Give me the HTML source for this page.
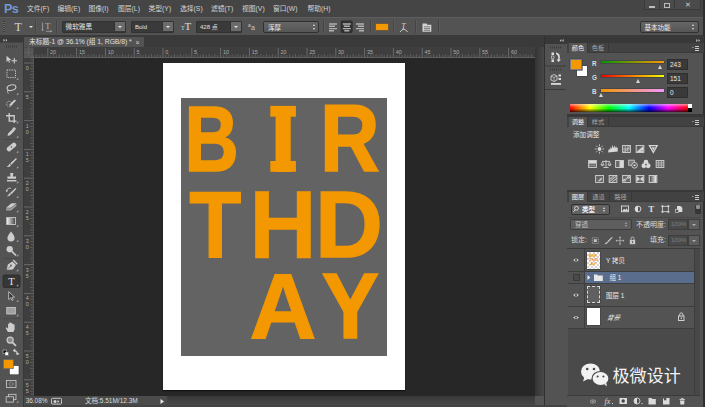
<!DOCTYPE html>
<html lang="zh-CN">
<head>
<meta charset="utf-8">
<title>Photoshop</title>
<style>
html,body{margin:0;padding:0;}
body{width:705px;height:407px;overflow:hidden;background:#282828;position:relative;
 font-family:"Liberation Sans","Noto Sans CJK SC",sans-serif;font-size:7px;color:#d8d8d8;}
.abs{position:absolute;}
div{box-sizing:border-box;}
.t{position:absolute;white-space:nowrap;line-height:1;}
/* top bars */
#menubar{left:0;top:0;width:705px;height:17px;background:#454545;}
#optbar{left:0;top:17px;width:705px;height:19px;background:#535353;border-top:1px solid #5e5e5e;border-bottom:1px solid #3a3a3a;}
#tabbar{left:24px;top:36px;width:520px;height:11px;background:#3a3a3a;}
#doctab{left:24px;top:37px;width:120px;height:10px;background:#535353;border-radius:1px 1px 0 0;}
#hruler{left:24px;top:47px;width:511px;height:11px;background:#3e3e3e;border-bottom:1px solid #606060;}
#vruler{left:24px;top:58px;width:9.500px;height:338px;background:#3e3e3e;border-right:0.500px solid #555;}
#toolbar{left:0;top:36px;width:24px;height:371px;background:#535353;border-right:1px solid #383838;}
#canvas{left:33px;top:58px;width:502px;height:338px;background:#272727;}
#doc{left:163px;top:62.700px;width:241.500px;height:327.300px;background:#fff;box-shadow:0 1px 1px #111;}
#gray{left:180.500px;top:97.700px;width:206px;height:258px;background:#636363;}
#status{left:24px;top:396px;width:511px;height:9px;background:linear-gradient(#383838,#484848);}
#statusL{left:24px;top:396px;width:142.500px;height:8.500px;background:#4b4b4b;}
/* right */
#rgap{left:535px;top:47px;width:9px;height:358px;background:linear-gradient(90deg,#343434,#484848);}
#rstrip{left:545px;top:36px;width:22px;height:371px;background:#535353;}
#rpanel{left:567px;top:36px;width:136px;height:371px;background:#535353;}
#redge{left:703px;top:0;width:2px;height:407px;background:#2e2e2e;}

/* menu */
.mi{position:absolute;top:5px;font-size:6.8px;line-height:8px;color:#d4d4d4;white-space:nowrap;}
#ps{left:4px;top:1.5px;font-size:12.5px;line-height:14px;font-weight:bold;color:#7299d0;letter-spacing:-0.6px;}
.wbtn{position:absolute;top:0;height:9.500px;background:#4b4b4b;border:1px solid #3a3a3a;border-top:none;}
/* options */
.dd{position:absolute;top:21px;height:11.500px;background:#3a3a3a;border:1px solid #323232;border-radius:1px;}
.dd .tx{position:absolute;left:3px;top:1.300px;font-size:6px;line-height:8px;color:#e2e2e2;white-space:nowrap;}
.dd .btn{position:absolute;right:0;top:0;width:11px;height:9px;background:#6b6b6b;border-left:1px solid #2f2f2f;}
.dd .btn:after{content:"";position:absolute;left:3px;top:3.500px;border:2px solid transparent;border-top:2.5px solid #e8e8e8;}
.sep{position:absolute;top:20px;width:1px;height:13px;background:#444;border-right:1px solid #5b5b5b;box-sizing:content-box;}
.ddl{position:absolute;top:21.300px;height:12px;background:linear-gradient(#656565,#565656);border:1px solid #303030;border-radius:2px;}
.ddl .tx{position:absolute;left:4px;top:1.5px;font-size:6.5px;line-height:8px;color:#f0f0f0;white-space:nowrap;}
.ud{position:absolute;right:2.500px;top:2px;width:3px;height:7px;}
.ud:before{content:"";position:absolute;left:0;top:0;border:1.600px solid transparent;border-top:none;border-bottom:2.200px solid #e0e0e0;}
.ud:after{content:"";position:absolute;left:0;top:3.800px;border:1.600px solid transparent;border-bottom:none;border-top:2.200px solid #e0e0e0;}

/* right panels */
.ptabs{position:absolute;left:567px;width:136.500px;height:10px;background:#424242;border-bottom:1px solid #3a3a3a;}
.ptab{position:absolute;top:0;height:10px;font-size:6.2px;line-height:10px;color:#a8a8a8;text-align:center;border-right:1px solid #383838;}
.ptab.on{background:#535353;color:#f2f2f2;}
.pmenu{position:absolute;right:4.500px;top:3px;width:7px;height:5px;}
.pmenu:before{content:"";position:absolute;left:0;top:1px;border:1.3px solid transparent;border-top:1.6px solid #c8c8c8;}
.pmenu:after{content:"";position:absolute;left:3px;top:0;width:4px;height:1px;background:#c8c8c8;box-shadow:0 2px 0 #c8c8c8,0 4px 0 #c8c8c8;}
.psep{position:absolute;left:567px;width:136.500px;height:3px;background:#383838;}
.vbox{position:absolute;left:667px;width:21px;height:11px;background:#3a3a3a;border:1px solid #2e2e2e;font-size:6.5px;line-height:9px;color:#e8e8e8;padding-left:2px;}
.sl{position:absolute;left:600.600px;width:63px;height:2.8px;box-shadow:0 0 0 0.5px #3a3a3a;}
.th{position:absolute;width:0;height:0;border:2.5px solid transparent;border-top:none;border-bottom:4px solid #d6d6d6;}
.lb{position:absolute;font-size:6.5px;line-height:7px;color:#dcdcdc;white-space:nowrap;}

.lrow{position:absolute;left:568px;width:126px;background:#535353;border-bottom:1px solid #3e3e3e;}
.eyec{position:absolute;left:0;top:0;bottom:0;width:17px;border-right:1px solid #3e3e3e;background:#535353;}
.thumb{position:absolute;left:19.300px;width:13px;background:#fff;box-shadow:0 0 0 0.500px #3c3c3c;}
.lname{position:absolute;font-size:6.5px;line-height:8px;color:#ececec;white-space:nowrap;}
.dim{color:#7e7e7e !important;}
</style>
</head>
<body>
<!-- MENU BAR -->
<div class="abs" id="menubar">
 <div class="t" id="ps">Ps</div>
 <div class="mi" style="left:27px">文件(F)</div>
 <div class="mi" style="left:57.5px">编辑(E)</div>
 <div class="mi" style="left:88.5px">图像(I)</div>
 <div class="mi" style="left:118px">图层(L)</div>
 <div class="mi" style="left:148.5px">类型(Y)</div>
 <div class="mi" style="left:180px">选择(S)</div>
 <div class="mi" style="left:211px">滤镜(T)</div>
 <div class="mi" style="left:242px">视图(V)</div>
 <div class="mi" style="left:273px">窗口(W)</div>
 <div class="mi" style="left:307.5px">帮助(H)</div>
 <div class="wbtn" style="left:643.500px;width:16px"><div class="abs" style="left:4px;top:5.500px;width:6px;height:2px;background:#bcbcbc"></div></div>
 <div class="wbtn" style="left:658.500px;width:16.500px"><div class="abs" style="left:4.500px;top:2.800px;width:6px;height:4.800px;border:1px solid #bcbcbc;border-top-width:1.5px"></div></div>
 <div class="wbtn" style="left:674px;width:27px"><div class="t" style="left:10px;top:0.500px;font-size:7px;color:#c8c8c8">✕</div></div>
</div>
<!-- OPTIONS BAR -->
<div class="abs" id="optbar">
</div>
<div class="abs" style="left:3px;top:21px;width:2px;height:11px;background:repeating-linear-gradient(#3a3a3a 0 1px,#6a6a6a 1px 2px)"></div>
<div class="t" style="left:14.500px;top:20.500px;font-family:'Liberation Serif',serif;font-size:12px;color:#d8d8d8">T</div>
<div class="abs" style="left:28.5px;top:26px;border:2px solid transparent;border-top:2.5px solid #e0e0e0"></div>
<div class="sep" style="left:35px"></div>
<div class="sep" style="left:56px"></div>
<div class="t" style="left:45px;top:21.800px;font-family:'Liberation Serif',serif;font-size:9px;color:#b0b0b0">T</div>
<svg class="abs" style="left:40px;top:20px" width="14" height="14" viewBox="0 0 14 14"><path d="M2.500 2.500v7.500M6 11.300h5.500" stroke="#a4a4a4" stroke-width="0.800" fill="none"/><path d="M2.500 11.300l-1.300-1.800h2.600zM12.300 11.300l-1.800-1.300v2.600z" fill="#a4a4a4"/></svg>
<div class="dd" style="left:61.500px;width:64.500px"><div class="tx" style="font-size:6.700px;top:0.800px">微软雅黑</div><div class="btn"></div></div>
<div class="dd" style="left:131px;width:43px"><div class="tx">Bold</div><div class="btn"></div></div>
<div class="t" style="left:181px;top:24.5px;font-family:'Liberation Serif',serif;font-size:6px;color:#dcdcdc">T</div>
<div class="t" style="left:184.5px;top:21px;font-family:'Liberation Serif',serif;font-size:11px;color:#dcdcdc">T</div>
<div class="dd" style="left:196px;width:46px"><div class="tx">428 点</div><div class="btn"></div></div>
<div class="t" style="left:248px;top:23px;font-size:5px;color:#c8c8c8">a</div>
<div class="t" style="left:251px;top:24px;font-size:7px;color:#c8c8c8">a</div>
<div class="ddl" style="left:263px;width:56px"><div class="tx">浑厚</div><div class="ud"></div></div>
<div class="sep" style="left:323px"></div>
<div class="sep" style="left:370px"></div>
<div class="abs" style="left:375px;top:23px;width:14px;height:8px;background:#f39800;border:1px solid #6d5a3a"></div>
<div class="sep" style="left:393px"></div>
<div class="sep" style="left:415px"></div>
<div class="sep" style="left:438px"></div>
<div class="ddl" style="left:639.500px;width:59px"><div class="tx">基本功能</div><div class="ud"></div></div>

<!-- DOCUMENT AREA -->
<div class="abs" id="tabbar"></div>
<div class="abs" id="doctab"><div class="t" style="left:5px;top:2px;font-size:6.8px;color:#e0e0e0;letter-spacing:-0.05px">未标题-1 @ 36.1% (组 1, RGB/8) *</div><div class="t" style="left:111.500px;top:2px;font-size:7px;color:#d0d0d0">×</div></div>
<div class="abs" id="canvas"></div>
<div class="abs" id="hruler"></div>
<div class="abs" id="vruler"></div>
<svg class="abs" id="rulers" style="left:0;top:0" width="705" height="407" viewBox="0 0 705 407">
 <rect x="24" y="47.5" width="9.5" height="10" fill="#555"/>
 <path d="M24.5 52.5H33M28.5 47V57" stroke="#777" stroke-width="0.6" stroke-dasharray="1 1" fill="none"/>
 <path d="M47.8 48V57M76.6 48V57M105.4 48V57M134.2 48V57M163.0 48V57M191.8 48V57M220.6 48V57M249.4 48V57M278.2 48V57M307.0 48V57M335.8 48V57M364.6 48V57M393.4 48V57M422.2 48V57M451.0 48V57M479.8 48V57M508.6 48V57" stroke="#7c7c7c" stroke-width="0.7" fill="none"/>
 <path d="M33.4 55V57M36.3 54V57M39.2 55V57M42.0 54V57M44.9 55V57M50.7 55V57M53.6 54V57M56.4 55V57M59.3 54V57M62.2 55V57M65.1 54V57M68.0 55V57M70.8 54V57M73.7 55V57M79.5 55V57M82.4 54V57M85.2 55V57M88.1 54V57M91.0 55V57M93.9 54V57M96.8 55V57M99.6 54V57M102.5 55V57M108.3 55V57M111.2 54V57M114.0 55V57M116.9 54V57M119.8 55V57M122.7 54V57M125.6 55V57M128.4 54V57M131.3 55V57M137.1 55V57M140.0 54V57M142.8 55V57M145.7 54V57M148.6 55V57M151.5 54V57M154.4 55V57M157.2 54V57M160.1 55V57M165.9 55V57M168.8 54V57M171.6 55V57M174.5 54V57M177.4 55V57M180.3 54V57M183.2 55V57M186.0 54V57M188.9 55V57M194.7 55V57M197.6 54V57M200.4 55V57M203.3 54V57M206.2 55V57M209.1 54V57M212.0 55V57M214.8 54V57M217.7 55V57M223.5 55V57M226.4 54V57M229.2 55V57M232.1 54V57M235.0 55V57M237.9 54V57M240.8 55V57M243.6 54V57M246.5 55V57M252.3 55V57M255.2 54V57M258.0 55V57M260.9 54V57M263.8 55V57M266.7 54V57M269.6 55V57M272.4 54V57M275.3 55V57M281.1 55V57M284.0 54V57M286.8 55V57M289.7 54V57M292.6 55V57M295.5 54V57M298.4 55V57M301.2 54V57M304.1 55V57M309.9 55V57M312.8 54V57M315.6 55V57M318.5 54V57M321.4 55V57M324.3 54V57M327.2 55V57M330.0 54V57M332.9 55V57M338.7 55V57M341.6 54V57M344.4 55V57M347.3 54V57M350.2 55V57M353.1 54V57M356.0 55V57M358.8 54V57M361.7 55V57M367.5 55V57M370.4 54V57M373.2 55V57M376.1 54V57M379.0 55V57M381.9 54V57M384.8 55V57M387.6 54V57M390.5 55V57M396.3 55V57M399.2 54V57M402.0 55V57M404.9 54V57M407.8 55V57M410.7 54V57M413.6 55V57M416.4 54V57M419.3 55V57M425.1 55V57M428.0 54V57M430.8 55V57M433.7 54V57M436.6 55V57M439.5 54V57M442.4 55V57M445.2 54V57M448.1 55V57M453.9 55V57M456.8 54V57M459.6 55V57M462.5 54V57M465.4 55V57M468.3 54V57M471.2 55V57M474.0 54V57M476.9 55V57M482.7 55V57M485.6 54V57M488.4 55V57M491.3 54V57M494.2 55V57M497.1 54V57M500.0 55V57M502.8 54V57M505.7 55V57M511.5 55V57M514.4 54V57M517.2 55V57M520.1 54V57M523.0 55V57M525.9 54V57M528.8 55V57M531.6 54V57" stroke="#747474" stroke-width="0.6" fill="none"/>
 <path d="M24 63.0H33M24 91.8H33M24 120.6H33M24 149.4H33M24 178.2H33M24 207.0H33M24 235.8H33M24 264.6H33M24 293.4H33M24 322.2H33M24 351.0H33M24 379.8H33" stroke="#7c7c7c" stroke-width="0.7" fill="none"/>
 <path d="M30 57.2H33M31 60.1H33M31 65.9H33M30 68.8H33M31 71.6H33M30 74.5H33M31 77.4H33M30 80.3H33M31 83.2H33M30 86.0H33M31 88.9H33M31 94.7H33M30 97.6H33M31 100.4H33M30 103.3H33M31 106.2H33M30 109.1H33M31 112.0H33M30 114.8H33M31 117.7H33M31 123.5H33M30 126.4H33M31 129.2H33M30 132.1H33M31 135.0H33M30 137.9H33M31 140.8H33M30 143.6H33M31 146.5H33M31 152.3H33M30 155.2H33M31 158.0H33M30 160.9H33M31 163.8H33M30 166.7H33M31 169.6H33M30 172.4H33M31 175.3H33M31 181.1H33M30 184.0H33M31 186.8H33M30 189.7H33M31 192.6H33M30 195.5H33M31 198.4H33M30 201.2H33M31 204.1H33M31 209.9H33M30 212.8H33M31 215.6H33M30 218.5H33M31 221.4H33M30 224.3H33M31 227.2H33M30 230.0H33M31 232.9H33M31 238.7H33M30 241.6H33M31 244.4H33M30 247.3H33M31 250.2H33M30 253.1H33M31 256.0H33M30 258.8H33M31 261.7H33M31 267.5H33M30 270.4H33M31 273.2H33M30 276.1H33M31 279.0H33M30 281.9H33M31 284.8H33M30 287.6H33M31 290.5H33M31 296.3H33M30 299.2H33M31 302.0H33M30 304.9H33M31 307.8H33M30 310.7H33M31 313.6H33M30 316.4H33M31 319.3H33M31 325.1H33M30 328.0H33M31 330.8H33M30 333.7H33M31 336.6H33M30 339.5H33M31 342.4H33M30 345.2H33M31 348.1H33M31 353.9H33M30 356.8H33M31 359.6H33M30 362.5H33M31 365.4H33M30 368.3H33M31 371.2H33M30 374.0H33M31 376.9H33M31 382.7H33M30 385.6H33M31 388.4H33M30 391.3H33M31 394.2H33" stroke="#747474" stroke-width="0.6" fill="none"/>
 <g font-family="Liberation Sans, sans-serif" font-size="5.4" fill="#adadad"><text x="50.1" y="53.6">20</text><text x="78.9" y="53.6">15</text><text x="107.7" y="53.6">10</text><text x="136.5" y="53.6">5</text><text x="165.3" y="53.6">0</text><text x="194.1" y="53.6">5</text><text x="222.9" y="53.6">10</text><text x="251.7" y="53.6">15</text><text x="280.5" y="53.6">20</text><text x="309.3" y="53.6">25</text><text x="338.1" y="53.6">30</text><text x="366.9" y="53.6">35</text><text x="395.7" y="53.6">40</text><text x="424.5" y="53.6">45</text><text x="453.3" y="53.6">50</text><text x="482.1" y="53.6">55</text><text x="510.9" y="53.6">60</text><text x="25.8" y="70.0">0</text><text x="25.8" y="98.8">5</text><text x="25.8" y="127.6">1</text><text x="25.8" y="133.6">0</text><text x="25.8" y="156.4">1</text><text x="25.8" y="162.4">5</text><text x="25.8" y="185.2">2</text><text x="25.8" y="191.2">0</text><text x="25.8" y="214.0">2</text><text x="25.8" y="220.0">5</text><text x="25.8" y="242.8">3</text><text x="25.8" y="248.8">0</text><text x="25.8" y="271.6">3</text><text x="25.8" y="277.6">5</text><text x="25.8" y="300.4">4</text><text x="25.8" y="306.4">0</text><text x="25.8" y="329.2">4</text><text x="25.8" y="335.2">5</text><text x="25.8" y="358.0">5</text><text x="25.8" y="364.0">0</text><text x="25.8" y="386.8">5</text><text x="25.8" y="392.8">5</text></g>
</svg>
<div class="abs" id="doc"></div>
<div class="abs" id="gray"></div>
<svg class="abs" id="letters" style="left:0;top:0" width="705" height="407" viewBox="0 0 705 407">
 <g font-family="Liberation Sans, sans-serif" font-weight="bold" fill="#f39800" stroke="#f39800">
  <text font-size="93.17" stroke-width="1.6" transform="translate(184.51,170.70) scale(0.8061,1)">B</text>
  <text font-size="92.88" stroke-width="2.0" transform="translate(270.57,170.80) scale(0.9822,1)">I</text>
  <text font-size="93.75" stroke-width="1.6" transform="translate(319.98,170.90) scale(0.8798,1)">R</text>
  <text font-size="94.33" stroke-width="1.2" transform="translate(189.20,257.50) scale(0.9038,1)">T</text>
  <text font-size="95.49" stroke-width="0.4" transform="translate(249.10,257.90) scale(0.9850,1)">H</text>
  <text font-size="94.04" stroke-width="1.4" transform="translate(314.90,257.40) scale(0.9992,1)">D</text>
  <text font-size="92.15" stroke-width="1.2" transform="translate(249.49,338.20) scale(1.0058,1)">A</text>
  <text font-size="91.86" stroke-width="1.6" transform="translate(321.79,338.00) scale(0.9325,1)">Y</text>
 </g>
 <rect x="270.3" y="105.9" width="25.6" height="10.8" fill="#f39800"/>
 <rect x="270.3" y="161" width="25.6" height="10.8" fill="#f39800"/>
</svg>
<div class="abs" id="status"></div>
<div class="abs" id="statusL"></div>
<svg class="abs" style="left:0;top:0" width="705" height="407" viewBox="0 0 705 407">
 <rect x="340.700" y="20.500" width="12" height="12.500" rx="1.500" fill="#303030"/>
 <g stroke="#b0b0b0" stroke-width="1.400" fill="none">
  <path d="M329 24h8M329 26.300h6M329 28.600h8M329 30.800h5"/>
  <path d="M342.800 24h8M343.800 26.300h6M342.800 28.600h8M344.300 30.800h5"/>
  <path d="M356 24h8M358 26.300h6M356 28.600h8M359 30.800h5"/>
 </g>
 <!-- warp text -->
 <text x="401.300" y="28.500" font-family="Liberation Serif, serif" font-size="8" font-style="italic" fill="#d4d4d4">T</text>
 <path d="M400 32q3.800-5.500 7.600 0" fill="none" stroke="#d4d4d4" stroke-width="0.900"/>
 <!-- panel icon -->
 <path d="M422.500 23.500h4l0.800 1.300h4v7h-8.800z" fill="#d4d4d4"/><path d="M424 26.800h6M424 28.600h6M424 30.300h6" stroke="#555" stroke-width="0.700"/>
 <!-- status -->
 <rect x="51.500" y="398.300" width="10" height="5.800" rx="1" fill="none" stroke="#d4d4d4" stroke-width="0.900"/><circle cx="55" cy="401.500" r="1.500" fill="#d4d4d4"/><path d="M57.500 400v3l2-1.500z" fill="#d4d4d4"/>
 <path d="M160.500 399v5l3.500-2.500z" fill="#e8e8e8"/>
</svg>
<div class="t" style="left:25.700px;top:398.300px;font-size:6.400px;color:#dcdcdc">36.08%</div>
<div class="t" style="left:85px;top:398.300px;font-size:6.500px;color:#dcdcdc">文档:5.51M/12.3M</div>
<!-- TOOLBAR -->
<div class="abs" id="toolbar"></div>
<svg class="abs" id="tools" style="left:0;top:0" width="24" height="407" viewBox="0 0 24 407">
 <rect x="0" y="36" width="24" height="6.500" fill="#3a3a3a"/>
 <path d="M3.500 38.800v3l1.500-1.500zM5.800 38.800v3l1.500-1.500z" fill="#c8c8c8"/>
 <path d="M6 46.500h12" stroke="#3c3c3c" stroke-width="2" stroke-dasharray="1 1"/>
 <path d="M3 139.500h18M3 258.500h18M3 318.500h18" stroke="#474747" stroke-width="0.800"/>
 <g transform="translate(11.3,59) scale(1) translate(-11.3,-59)"><path d="M6.500 55.7v6.300l1.600-1.400 1 2.200 1-0.500-1-2.100 2.200-0.200z" fill="#cdcdcd"/><path d="M14.300 58v5.600M11.500 60.8h5.600" stroke="#cdcdcd" stroke-width="1.100" fill="none"/></g><g transform="translate(11.3,74) scale(0.9) translate(-11.3,-74)"><rect x="6.5" y="69.5" width="9.500" height="8.500" fill="none" stroke="#cdcdcd" stroke-width="1" stroke-dasharray="1.500 1"/></g><path d="M18.3 79.8h-2l2-2z" fill="#b0b0b0"/><g transform="translate(11.3,89) scale(0.9) translate(-11.3,-89)"><ellipse cx="11.5" cy="87.5" rx="5" ry="3" fill="none" stroke="#cdcdcd" stroke-width="1.200" transform="rotate(-15 11.5 87.5)"/><path d="M8 90q-2 2 0 4" stroke="#cdcdcd" stroke-width="1" fill="none"/></g><path d="M18.3 94.8h-2l2-2z" fill="#b0b0b0"/><g transform="translate(11.3,103) scale(0.9) translate(-11.3,-103)"><circle cx="9" cy="104" r="3" fill="none" stroke="#cdcdcd" stroke-width="0.900" stroke-dasharray="1.200 0.800"/><path d="M9 105l6-6 1.500 1.500-6 6z" fill="#cdcdcd"/></g><path d="M18.3 108.8h-2l2-2z" fill="#b0b0b0"/><g transform="translate(11.3,117.5) scale(0.9) translate(-11.3,-117.5)"><path d="M9 112.5v9h8M5.500 115.5h9v8" fill="none" stroke="#cdcdcd" stroke-width="1.500"/></g><path d="M18.3 123.3h-2l2-2z" fill="#b0b0b0"/><g transform="translate(11.3,132) scale(0.9) translate(-11.3,-132)"><path d="M7 136.5l1-3 5-5 2 2-5 5z" fill="#cdcdcd"/><path d="M12.500 128l2-1.500 2 2-1.500 2z" fill="#cdcdcd"/></g><path d="M18.3 137.8h-2l2-2z" fill="#b0b0b0"/><g transform="translate(11.3,147) scale(0.9) translate(-11.3,-147)"><rect x="5.500" y="144.5" width="12" height="5" rx="2" fill="#cdcdcd" transform="rotate(-40 11.500 147)"/><circle cx="11.500" cy="147" r="0.900" fill="#535353"/></g><path d="M18.3 152.8h-2l2-2z" fill="#b0b0b0"/><g transform="translate(11.3,162.5) scale(0.9) translate(-11.3,-162.5)"><path d="M16.500 157.5l1 1-6 6.500-1.500-1.500z" fill="#cdcdcd"/><path d="M9.500 164.0l1.500 1.500q-1.500 2.500-5 2 2-1 3.500-3.500z" fill="#cdcdcd"/></g><path d="M18.3 168.3h-2l2-2z" fill="#b0b0b0"/><g transform="translate(11.3,177.5) scale(0.9) translate(-11.3,-177.5)"><path d="M10 172.5h3.500l-0.500 4h3.500v2.500h-9.500v-2.500h3.500z" fill="#cdcdcd"/><rect x="6.500" y="180.3" width="10.500" height="1.600" fill="#cdcdcd"/></g><path d="M18.3 183.3h-2l2-2z" fill="#b0b0b0"/><g transform="translate(11.3,192) scale(0.9) translate(-11.3,-192)"><path d="M16 187.5l1 1-5.500 6-1.500-1.500z" fill="#cdcdcd"/><path d="M9.500 193l1.500 1.500q-1.500 2.500-4.500 2 1.500-1 3-3.500z" fill="#cdcdcd"/><path d="M6 191a3.500 3.500 0 0 1 5-3" stroke="#cdcdcd" stroke-width="1" fill="none"/><path d="M5 190l1.200 2.200 1.800-1.800z" fill="#cdcdcd"/></g><path d="M18.3 197.8h-2l2-2z" fill="#b0b0b0"/><g transform="translate(11.3,206.5) scale(0.9) translate(-11.3,-206.5)"><path d="M5.500 208.0l6-5h5.500l-6 5z" fill="#cdcdcd"/><path d="M5.500 208.5h5.500l6-5v2.500l-6 5h-5.500z" fill="#a0a0a0"/></g><path d="M18.3 212.3h-2l2-2z" fill="#b0b0b0"/><g transform="translate(11.3,221) scale(0.8) translate(-11.3,-221)"><rect x="5.500" y="216.5" width="11" height="9" fill="#9a9a9a" stroke="#cdcdcd" stroke-width="1"/></g><path d="M18.3 226.8h-2l2-2z" fill="#b0b0b0"/><g transform="translate(11.3,236) scale(0.9) translate(-11.3,-236)"><path d="M11 231q4 5 4 7.200a4 3.800 0 0 1-8 0q0-2.200 4-7.200z" fill="#cdcdcd"/></g><path d="M18.3 241.8h-2l2-2z" fill="#b0b0b0"/><g transform="translate(11.3,250.5) scale(0.9) translate(-11.3,-250.5)"><circle cx="9.500" cy="249.0" r="3.500" fill="#cdcdcd"/><path d="M12 251.5l4.500 4.500" stroke="#cdcdcd" stroke-width="1.800" fill="none"/></g><path d="M18.3 256.3h-2l2-2z" fill="#b0b0b0"/><g transform="translate(11.3,265.5) scale(0.9) translate(-11.3,-265.5)"><path d="M6 270.5l1.500-6 5-3.500 4 4-3.500 5z" fill="#cdcdcd"/><circle cx="11" cy="265.5" r="1" fill="#535353"/><path d="M6 270.5l4.500-4.500" stroke="#535353" stroke-width="0.700"/><path d="M13.500 259.5l4.500 4.500" stroke="#cdcdcd" stroke-width="1.500"/></g><path d="M18.3 271.3h-2l2-2z" fill="#b0b0b0"/><rect x="3" y="275.0" width="17" height="12.500" rx="1.500" fill="#363636" stroke="#2a2a2a" stroke-width="0.800"/><text x="8.200" y="285.3" font-family="Liberation Serif, serif" font-size="10.500" fill="#e4e4e4">T</text><path d="M18.3 286.3h-2l2-2z" fill="#b0b0b0"/><g transform="translate(11.3,296) scale(0.8) translate(-11.3,-296)"><path d="M8 290.5v10l2.500-2.300 1.600 3.300 1.600-0.800-1.600-3.200h3.300z" fill="#3a3a3a" stroke="#cdcdcd" stroke-width="1"/></g><path d="M18.3 301.8h-2l2-2z" fill="#b0b0b0"/><g transform="translate(11.3,310.5) scale(0.78) translate(-11.3,-310.5)"><rect x="5.500" y="306.5" width="11" height="8.500" fill="#a0a0a0" stroke="#cdcdcd" stroke-width="1"/></g><path d="M18.3 316.3h-2l2-2z" fill="#b0b0b0"/><g transform="translate(11.3,327.5) scale(0.9) translate(-11.3,-327.5)"><path d="M7.500 332.5l-2.500-4.500 1.200-0.700 1.500 1.500v-5.500h1.400v-1.300h1.500v0.600h1.500v0.700h1.400v1h1.500v5.200l-1.300 3z" fill="#cdcdcd"/></g><g transform="translate(11.3,341) scale(0.9) translate(-11.3,-341)"><circle cx="10" cy="340" r="3.400" fill="#8a8a8a" stroke="#cdcdcd" stroke-width="1.300"/><path d="M12.500 342.5l4 4" stroke="#cdcdcd" stroke-width="2" fill="none"/></g><rect x="3" y="350.0" width="3.500" height="3.500" fill="#111" stroke="#cdcdcd" stroke-width="0.600"/><rect x="5" y="352.0" width="3.500" height="3.500" fill="#fff" stroke="#333" stroke-width="0.400"/><path d="M14.500 350.5q3 0 3 3.500M13 350.5l2-1.500v3zM17.500 355.0l-1.500-1.500h3z" fill="#cdcdcd" stroke="#cdcdcd" stroke-width="0.700"/><rect x="9.300" y="365.500" width="9.700" height="9.300" fill="#fff" stroke="#333" stroke-width="0.600"/><rect x="3.500" y="359.700" width="9.800" height="9" fill="#f39800" stroke="#6a6a6a" stroke-width="0.700"/><g transform="translate(11.3,383.8) scale(0.82) translate(-11.3,-383.8)"><rect x="5.500" y="379.8" width="11.500" height="8.500" fill="#535353" stroke="#cdcdcd" stroke-width="1"/><circle cx="11.200" cy="384.0" r="2.300" fill="none" stroke="#cdcdcd" stroke-width="0.900" stroke-dasharray="1 0.700"/></g><g transform="translate(11.3,398) scale(0.82) translate(-11.3,-398)"><rect x="8" y="393.5" width="9" height="6.500" fill="#535353" stroke="#cdcdcd" stroke-width="1"/><rect x="5" y="396.5" width="9" height="6.500" fill="#535353" stroke="#cdcdcd" stroke-width="1"/></g><path d="M18.3 402.8h-2l2-2z" fill="#b0b0b0"/>
</svg>
<!-- RIGHT PANELS -->
<div class="abs" id="rgap"></div>
<div class="abs" style="left:535px;top:396px;width:9px;height:9px;background:#555"></div>
<div class="abs" style="left:544px;top:36px;width:1.5px;height:371px;background:#303030"></div>
<div class="abs" style="left:566px;top:36px;width:1.5px;height:371px;background:#3a3a3a"></div>
<div class="abs" id="rstrip"></div>
<div class="abs" id="rpanel"></div>
<div class="abs" id="redge"></div>
<div class="abs" style="left:545px;top:36px;width:158.500px;height:7.500px;background:#383838"></div>
<svg class="abs" style="left:545px;top:36px" width="160" height="60" viewBox="0 0 160 60">
 <path d="M18.600 3v3l-1.500-1.500zM16.300 3v3l-1.500-1.500z" fill="#c8c8c8"/>
 <path d="M151.200 3v3l1.500-1.500zM153.500 3v3l1.500-1.500z" fill="#c8c8c8"/>
 <path d="M5 11.500h12M5 33.500h12" stroke="#3c3c3c" stroke-width="2" stroke-dasharray="1 1"/>
 <path d="M0 30h21M0 53.500h21" stroke="#3a3a3a" stroke-width="1.200"/>
 <g fill="#dcdcdc">
  <rect x="6.500" y="16.500" width="2.500" height="2.500"/><rect x="6.500" y="20" width="2.500" height="2.500" fill="none" stroke="#dcdcdc" stroke-width="0.600"/><rect x="6.500" y="23.500" width="2.500" height="2.500"/>
  <path d="M11 16.500q5 0.500 3.500 7l1.500 0-2.500 2.500-2-2.500h1.500q1-4-2-5.500z"/>
  <path d="M6 40l3-1.500 3 1.500v4l-3 1.500-3-1.500z" fill="none" stroke="#dcdcdc" stroke-width="0.800"/><path d="M9 41.500v4M6 40l3 1.500 3-1.500" fill="none" stroke="#dcdcdc" stroke-width="0.600"/>
  <rect x="13.500" y="38.500" width="2.500" height="2"/><rect x="13.500" y="42" width="2.500" height="2"/><rect x="6" y="47" width="10" height="1.800"/>
 </g>
</svg>
<!-- COLOR PANEL -->
<div class="ptabs" style="top:43px"><div class="ptab on" style="left:1.700px;width:19.500px">颜色</div><div class="ptab" style="left:21.200px;width:20.500px">色板</div><div class="pmenu"></div></div>
<div class="abs" style="left:577px;top:65.500px;width:10px;height:10.200px;background:#fff;box-shadow:0 0 0 0.700px #444"></div>
<div class="abs" style="left:571.300px;top:59.700px;width:10px;height:9.800px;background:#f39800;box-shadow:0 0 0 0.800px #8a8a8a,0 0 0 1.600px #444"></div>
<div class="lb" style="left:592px;top:59.800px;font-weight:bold;font-size:6.300px">R</div>
<div class="lb" style="left:592px;top:73.800px;font-weight:bold;font-size:6.300px">G</div>
<div class="lb" style="left:592px;top:87.800px;font-weight:bold;font-size:6.300px">B</div>
<div class="sl" style="top:60.600px;background:linear-gradient(90deg,#009700,#ff9700)"></div>
<div class="sl" style="top:74.600px;background:linear-gradient(90deg,#f30000,#f3ff00)"></div>
<div class="sl" style="top:88.800px;background:linear-gradient(90deg,#f39700,#f397ff)"></div>
<div class="th" style="left:658px;top:64.500px"></div>
<div class="th" style="left:635.500px;top:78.500px"></div>
<div class="th" style="left:598.500px;top:92.500px"></div>
<div class="vbox" style="top:59px">243</div>
<div class="vbox" style="top:73px">151</div>
<div class="vbox" style="top:87px">0</div>
<div class="abs" style="left:570.300px;top:104px;width:117.700px;height:8.300px;background:linear-gradient(180deg,rgba(255,255,255,0.550),rgba(255,255,255,0) 45%,rgba(0,0,0,0) 55%,rgba(0,0,0,0.750)),linear-gradient(90deg,#f00,#ff0 17%,#0f0 33%,#0ff 50%,#00f 67%,#f0f 83%,#f00)"></div>
<div class="abs" style="left:688px;top:104px;width:4px;height:4.200px;background:#fff"></div>
<div class="abs" style="left:688px;top:108.200px;width:4px;height:4.100px;background:#000"></div>
<div class="psep" style="top:114px"></div>
<!-- ADJUSTMENTS PANEL -->
<div class="ptabs" style="top:117px"><div class="ptab on" style="left:1.700px;width:19.500px">调整</div><div class="ptab" style="left:21.200px;width:20.500px">样式</div><div class="pmenu"></div></div>
<div class="lb" style="left:573px;top:131px;font-size:6.600px;color:#e6e6e6">添加调整</div>
<svg class="abs" id="adjicons" style="left:0;top:0" width="705" height="407" viewBox="0 0 705 407">
 <g transform="translate(599.5,149) scale(0.86) translate(-599.5,-149)"><circle cx="599.5" cy="149" r="2.200" fill="#d8d8d8"/><path d="M599.5 143.5v2.300M599.5 152.2v2.300M594.0 149h2.300M602.7 149h2.300M595.7 145.2l1.500 1.500M601.8 151.3l1.500 1.500M595.7 152.8l1.500-1.500M601.8 146.7l1.500-1.500" stroke="#d8d8d8" stroke-width="0.900"/></g><g transform="translate(613,149) scale(0.86) translate(-613,-149)"><path d="M607.5 153v-2.500l1-1.500 1 1 1-4 1 3 1-5 1 4 1-3.500 1 3.500 1-2.500 1 2.500 1-1v5z" fill="#d8d8d8"/></g><g transform="translate(626.5,149) scale(0.86) translate(-626.5,-149)"><rect x="622.0" y="145" width="9" height="8" fill="#686868" stroke="#d8d8d8" stroke-width="1"/><path d="M622.5 152.5q5-1 8-7M625.0 145v8M628.0 145v8M622.0 149h9" stroke="#d8d8d8" stroke-width="0.700" fill="none"/></g><g transform="translate(640,149) scale(0.86) translate(-640,-149)"><rect x="635.5" y="145" width="9" height="8" fill="#686868" stroke="#d8d8d8" stroke-width="1"/><path d="M636 152.5l8-7v7z" fill="#d8d8d8"/><path d="M637 147h2.500M638.2 145.8v2.500M641 151h2" stroke="#444" stroke-width="0.600"/></g><g transform="translate(653.3,149) scale(0.86) translate(-653.3,-149)"><path d="M648.8 145h9l-4.500 8z" fill="none" stroke="#d8d8d8" stroke-width="1.500"/><path d="M651.3 147h4l-2 3.500z" fill="#d8d8d8"/></g><g transform="translate(592.5,164) scale(0.86) translate(-592.5,-164)"><rect x="588.0" y="160" width="9" height="8" fill="#686868" stroke="#d8d8d8" stroke-width="1"/><rect x="588.5" y="160.5" width="8" height="3" fill="#d8d8d8"/><path d="M588.5 165.5h8" stroke="#d8d8d8" stroke-width="0.800" stroke-dasharray="1 1"/></g><g transform="translate(606,164) scale(0.86) translate(-606,-164)"><path d="M606 159.5v8M603 168h6M601.5 161h9" stroke="#d8d8d8" stroke-width="1"/><path d="M600 165h3.800l-1.900-3.500zM608.2 165h3.800l-1.900-3.500z" fill="none" stroke="#d8d8d8" stroke-width="0.800"/><path d="M600 165q1.900 2.500 3.800 0zM608.2 165q1.900 2.500 3.800 0z" fill="#d8d8d8"/></g><g transform="translate(619.5,164) scale(0.86) translate(-619.5,-164)"><rect x="615.0" y="160" width="9" height="8" fill="#686868" stroke="#d8d8d8" stroke-width="1"/><rect x="619.5" y="160" width="4.500" height="8" fill="#d8d8d8"/></g><g transform="translate(633,164) scale(0.86) translate(-633,-164)"><rect x="628" y="159.5" width="6.500" height="6" fill="#777" stroke="#d8d8d8" stroke-width="0.900"/><circle cx="634.8" cy="165.5" r="3.300" fill="#555" stroke="#d8d8d8" stroke-width="1"/><circle cx="634.8" cy="165.5" r="1.300" fill="#d8d8d8"/></g><g transform="translate(646,164) scale(0.86) translate(-646,-164)"><circle cx="646" cy="162" r="2.800" fill="#d8d8d8"/><circle cx="643.5" cy="166" r="2.800" fill="#d8d8d8"/><circle cx="648.5" cy="166" r="2.800" fill="#d8d8d8"/><circle cx="646" cy="164.7" r="1" fill="#535353"/></g><g transform="translate(660,164) scale(0.86) translate(-660,-164)"><rect x="655.5" y="160" width="9" height="8" fill="#686868" stroke="#d8d8d8" stroke-width="1"/><path d="M658.5 160v8M661.5 160v8M655.5 162.7h9M655.5 165.3h9" stroke="#d8d8d8" stroke-width="0.700"/></g><g transform="translate(599.5,179) scale(0.86) translate(-599.5,-179)"><rect x="595.0" y="175" width="9" height="8" fill="#686868" stroke="#d8d8d8" stroke-width="1"/><path d="M597.0 181.5l5-5v3.500l-3 1.500z" fill="#d8d8d8"/><path d="M596.5 182l6-6" stroke="#333" stroke-width="0.700"/></g><g transform="translate(613,179) scale(0.86) translate(-613,-179)"><rect x="608.5" y="175" width="9" height="8" fill="#686868" stroke="#d8d8d8" stroke-width="1"/><path d="M609 182l8-6.500M609 179.5l5-4M612 182.5l5-4" stroke="#d8d8d8" stroke-width="1.100"/></g><g transform="translate(626.5,179) scale(0.86) translate(-626.5,-179)"><rect x="622.0" y="175" width="9" height="8" fill="#686868" stroke="#d8d8d8" stroke-width="1"/><path d="M622.5 182.5v-3l3.500-1 1.500-2.500 3-1v3l-3.500 1-1.500 2.500z" fill="#d8d8d8"/><path d="M622.5 182.5l8-7" stroke="#333" stroke-width="0.500"/></g><g transform="translate(640,179) scale(0.86) translate(-640,-179)"><rect x="635.5" y="175" width="9" height="8" fill="#686868" stroke="#d8d8d8" stroke-width="1"/><path d="M636 175.5l4 3.500-4 3.500zM644 175.5l-4 3.500 4 3.500z" fill="#d8d8d8"/></g><g transform="translate(653,179) scale(0.86) translate(-653,-179)"><rect x="648.5" y="175" width="9" height="8" fill="#9a9a9a" stroke="#d8d8d8" stroke-width="1"/></g>
</svg>
<div class="psep" style="top:189.500px"></div>
<!-- LAYERS PANEL -->
<div class="ptabs" style="top:192px"><div class="ptab on" style="left:2px;width:19px">图层</div><div class="ptab" style="left:21px;width:22px">通道</div><div class="ptab" style="left:43px;width:22px">路径</div><div class="pmenu"></div></div>
<!-- layers controls -->
<div class="ddl" style="left:570.500px;top:204px;width:39px;height:10.500px;background:#626262"><div class="tx" style="left:10.500px;top:1px;font-weight:bold">类型</div><div class="ud" style="top:1.500px"></div></div>
<div class="abs" style="left:695px;top:204.500px;width:5.500px;height:9.500px;background:#363636;border-radius:1px"></div>
<div class="abs" style="left:695.500px;top:205px;width:4.500px;height:3.800px;background:#8e8e8e;border-radius:1px"></div>
<div class="abs" style="left:567px;top:216.500px;width:133px;height:1px;background:#484848"></div>
<div class="ddl" style="left:570px;top:219px;width:61.500px;height:11px;background:#5e5e5e;border-color:#3e3e3e"><div class="tx" style="top:1.300px;color:#c2c2c2">穿透</div><div class="ud" style="top:1.500px;opacity:0.600"></div></div>
<div class="lb" style="left:636px;top:221px;font-size:7px">不透明度:</div>
<div class="vbox dim" style="top:219px;left:668px;width:20px;height:11px;background:#4a4a4a;border-color:#3e3e3e;font-size:6px">100%</div>
<div class="abs" style="left:688px;top:219px;width:11.500px;height:11px;background:#5e5e5e;border:1px solid #3e3e3e"><div class="abs" style="left:2.500px;top:3.500px;border:2px solid transparent;border-top:2.500px solid #b0b0b0"></div></div>
<div class="lb" style="left:571px;top:236.300px;font-size:7px">锁定:</div>
<div class="lb" style="left:650px;top:236.300px;font-size:7px">填充:</div>
<div class="vbox dim" style="top:235px;left:668px;width:20px;height:10.500px;background:#4a4a4a;border-color:#3e3e3e;font-size:6px">100%</div>
<div class="abs" style="left:688px;top:235px;width:11.500px;height:10.500px;background:#5e5e5e;border:1px solid #3e3e3e"><div class="abs" style="left:2.500px;top:3.500px;border:2px solid transparent;border-top:2.500px solid #b0b0b0"></div></div>
<div class="abs" style="left:567px;top:248px;width:133px;height:1px;background:#3a3a3a"></div>
<!-- layer list -->
<div class="abs" style="left:568px;top:249px;width:126px;height:146px;background:#4a4a4a"></div>
<div class="abs" style="left:694px;top:249px;width:6px;height:146px;background:#484848;border-left:1px solid #3c3c3c"></div>
<div class="lrow" style="top:249px;height:22.500px"><div class="eyec"></div>
 <div class="thumb" style="top:2.500px;height:17px;background:#fff repeating-conic-gradient(#d4d4d4 0 25%,#fff 0 50%) 0 0/4px 4px"></div>
 <div class="t" style="left:21px;top:4.500px;font-size:4.300px;line-height:4.300px;font-weight:bold;color:#f39800;letter-spacing:0.200px;white-space:pre">BIR<br>THD<br> AY</div>
 <div class="lname" style="left:38px;top:7.500px">Y 拷贝</div></div>
<div class="lrow" style="top:271.500px;height:12.500px;background:#5b6d8c"><div class="eyec"></div>
 <div class="abs" style="left:4.500px;top:2.500px;width:7px;height:7px;background:#4a4a4a;border:0.500px solid #3a3a3a"></div>
 <div class="lname" style="left:41.500px;top:2px">组 1</div></div>
<div class="lrow" style="top:284px;height:23px"><div class="eyec"></div>
 <div class="thumb" style="top:2.300px;height:17px;background:#606060;border:1px dashed #d8d8d8"></div>
 <div class="lname" style="left:38px;top:7.500px">图层 1</div></div>
<div class="lrow" style="top:307px;height:21.500px"><div class="eyec"></div>
 <div class="thumb" style="top:0.800px;height:17.700px"></div>
 <div class="lname" style="left:38.500px;top:6.500px;font-style:italic;transform:skewX(-12deg)">背景</div></div>
<div class="abs" style="left:567px;top:395px;width:133px;height:12px;background:#535353;border-top:1px solid #3a3a3a"></div>
<svg class="abs" style="left:0;top:0" width="705" height="407" viewBox="0 0 705 407">
 <!-- search icon -->
 <circle cx="576.500" cy="208.300" r="1.900" fill="none" stroke="#dcdcdc" stroke-width="0.900"/><path d="M575.200 209.800l-1.800 2" stroke="#dcdcdc" stroke-width="1"/>
 <!-- filter icons -->
 <rect x="621.500" y="206" width="7" height="5.700" fill="none" stroke="#dcdcdc" stroke-width="0.900"/><path d="M622.300 211l1.800-2.200 1.300 1.300 1.300-1.800 1.300 2.700z" fill="#dcdcdc"/>
 <circle cx="638" cy="209" r="2.900" fill="none" stroke="#dcdcdc" stroke-width="0.900"/><path d="M638 206.100a2.900 2.900 0 0 0 0 5.800z" fill="#dcdcdc"/>
 <text x="648.200" y="212" font-family="Liberation Serif, serif" font-weight="bold" font-size="9" fill="#dcdcdc">T</text>
 <rect x="662.500" y="206.300" width="5.800" height="5.400" fill="none" stroke="#dcdcdc" stroke-width="0.800"/><rect x="661.500" y="205.300" width="1.800" height="1.800" fill="#dcdcdc"/><rect x="667.500" y="205.300" width="1.800" height="1.800" fill="#dcdcdc"/><rect x="661.500" y="210.900" width="1.800" height="1.800" fill="#dcdcdc"/><rect x="667.500" y="210.900" width="1.800" height="1.800" fill="#dcdcdc"/>
 <path d="M677 206h3.500l1.800 1.800v4.200h-5.300z" fill="#dcdcdc"/><rect x="675.500" y="209.300" width="3.200" height="3" fill="#535353" stroke="#dcdcdc" stroke-width="0.600"/>
 <!-- lock icons -->
 <rect x="592.300" y="237.800" width="6" height="5.600" fill="none" stroke="#c4c4c4" stroke-width="0.700" stroke-dasharray="1 0.800"/><rect x="593.800" y="239.200" width="3" height="2.800" fill="#c4c4c4"/>
 <path d="M612 236.800l0.700 0.700-4.300 4.800-1.100-1.100z" fill="#c4c4c4"/><path d="M607 241.500l1.100 1.100q-1.200 1.800-3.900 1.500 1.600-0.700 2.800-2.600z" fill="#c4c4c4"/>
 <path d="M620 237v7.400M616.300 240.700h7.400" stroke="#bcbcbc" stroke-width="0.700"/><path d="M620 236.300l1.100 1.400h-2.200zM620 245.100l1.100-1.400h-2.200zM615.600 240.700l1.400-1.100v2.200zM624.400 240.700l-1.400-1.100v2.200z" fill="#bcbcbc"/>
 <rect x="629.800" y="240" width="5.400" height="4.200" fill="#c8c8c8"/><path d="M631 240v-1.400a1.500 1.500 0 0 1 3 0v1.400" fill="none" stroke="#c8c8c8" stroke-width="0.900"/><rect x="632" y="241.200" width="1" height="1.700" fill="#535353"/>
 <!-- eyes -->
 <path d="M573.1 260q2.900-3.200 5.800 0q-2.900 3.200-5.800 0z" fill="#d0d0d0"/><circle cx="576" cy="260" r="1.100" fill="#484848"/><path d="M573.1 295q2.900-3.200 5.800 0q-2.900 3.200-5.800 0z" fill="#d0d0d0"/><circle cx="576" cy="295" r="1.100" fill="#484848"/><path d="M573.1 317.5q2.900-3.200 5.800 0q-2.900 3.200-5.800 0z" fill="#d0d0d0"/><circle cx="576" cy="317.5" r="1.100" fill="#484848"/>
 <!-- group arrow + folder -->
 <path d="M587.500 275v5l2.800-2.500z" fill="#f0f0f0"/>
 <path d="M594 274.500h3l0.800 1h5v5.500h-8.800z" fill="#e8e8e8"/>
 <!-- lock on background -->
 <rect x="678.500" y="316" width="5.500" height="4.500" fill="none" stroke="#dcdcdc" stroke-width="0.900"/><path d="M679.700 316v-1.500a1.600 1.600 0 0 1 3.200 0v1.500" fill="none" stroke="#dcdcdc" stroke-width="0.900"/><rect x="680.800" y="317.300" width="1" height="1.800" fill="#dcdcdc"/>
 <!-- bottom icons -->
 <path d="M590.500 401.500a1.500 1.500 0 0 1 1.500-1.500h1M595.500 401.500a1.500 1.500 0 0 0-1.500-1.500h-1M590.500 401.500a1.500 1.500 0 0 0 1.500 1.500h2a1.500 1.500 0 0 0 1.500-1.500M592 401.500h2" fill="none" stroke="#bdbdbd" stroke-width="0.700"/>
 <text x="604.500" y="404" font-family="Liberation Serif, serif" font-style="italic" font-size="8" fill="#dcdcdc">fx</text><rect x="612" y="403" width="1" height="1" fill="#dcdcdc"/>
 <rect x="619.500" y="398" width="7.500" height="6" fill="#dcdcdc"/><circle cx="623.200" cy="401" r="1.700" fill="#444"/>
 <circle cx="637" cy="401" r="3" fill="none" stroke="#dcdcdc" stroke-width="0.800"/><path d="M637 398a3 3 0 0 0 0 6z" fill="#dcdcdc"/><rect x="641.500" y="403" width="1" height="1" fill="#dcdcdc"/>
 <path d="M648.500 398h3l0.800 1h3.500v5.500h-7.300z" fill="#dcdcdc"/>
 <path d="M664 398h5.500v6.500h-6.500v-5.500z" fill="#dcdcdc"/><rect x="664" y="398" width="2.300" height="2.300" fill="#535353"/>
 <path d="M679.500 399.500h5.500M681.200 399.500v-1h2v1" stroke="#dcdcdc" stroke-width="0.800" fill="none"/><path d="M680 400.500h4.500l-0.400 4h-3.700z" fill="#dcdcdc"/>
 <!-- wechat watermark -->
 <g fill="#f2f2f2">
  <ellipse cx="590.500" cy="371.500" rx="9.500" ry="8"/><path d="M584.500 377l-1.500 4.500 5-2.500z"/>
  <ellipse cx="600.500" cy="378.500" rx="8.500" ry="7" stroke="#4a4a4a" stroke-width="1.200"/><path d="M604 384l3 2.500-0.800-3.800z"/>
 </g>
 <g fill="#4a4a4a"><circle cx="587.200" cy="369" r="1.300"/><circle cx="594" cy="369" r="1.300"/><circle cx="597.600" cy="376.500" r="1.100"/><circle cx="603.400" cy="376.500" r="1.100"/></g>
</svg>
<div class="t" style="left:612.500px;top:366.500px;font-size:17px;line-height:20px;color:#f4f4f4;letter-spacing:0.100px">极微设计</div>
<div class="abs" style="left:24px;top:404.500px;width:543px;height:2.500px;background:#434343"></div>
<div class="abs" style="left:7.400px;top:217.900px;width:7.800px;height:6.200px;background:linear-gradient(90deg,#f0f0f0,#4a4a4a)"></div>
<div class="abs" style="left:649.600px;top:176px;width:6.800px;height:6px;background:linear-gradient(90deg,#555,#eee)"></div>
</body>
</html>
